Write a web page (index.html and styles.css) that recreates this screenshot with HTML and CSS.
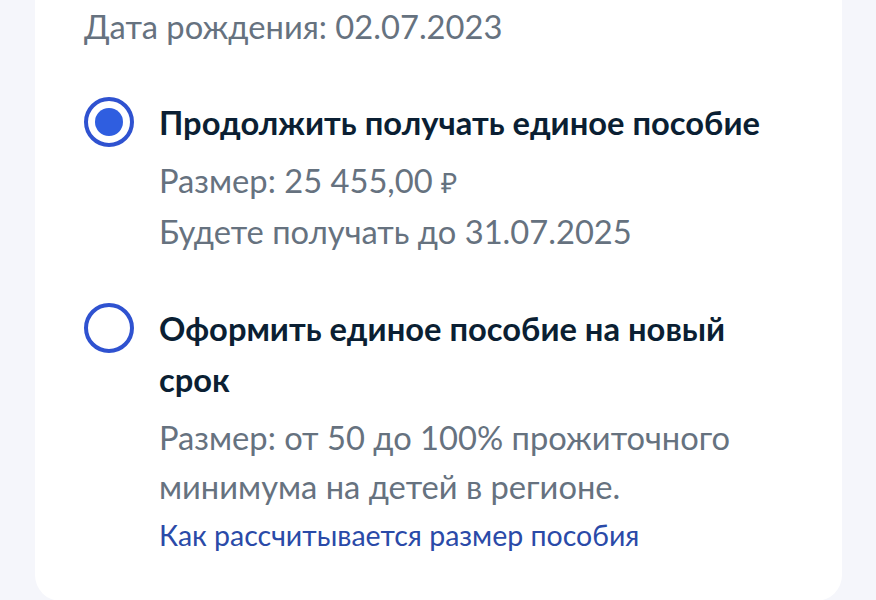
FILE: index.html
```html
<!DOCTYPE html>
<html lang="ru">
<head>
    <meta charset="UTF-8">
    <meta name="viewport" content="width=device-width, initial-scale=1.0">
    <title>Единое пособие</title>
    <link rel="stylesheet" href="styles.css">
</head>
<body>

<div class="kartochka">
    <p class="data">Дата рождения: 02.07.2023</p>

    <div class="variant">
        <span class="radio radio-vybran"></span>
        <div class="variant-tekst">
            <h3>Продолжить получать единое пособие</h3>
            <p>Размер: 25 455,00 <span class="rubl">₽</span></p>
            <p>Будете получать до 31.07.2025</p>
        </div>
    </div>

    <div class="variant">
        <span class="radio"></span>
        <div class="variant-tekst">
            <h3>Оформить единое пособие на новый срок</h3>
            <p>Размер: от 50 до 100% прожиточного минимума на детей в регионе.</p>
            <a href="#" class="ssylka">Как рассчитывается размер пособия</a>
        </div>
    </div>
</div>

</body>
</html>
```

FILE: styles.css
```css
body {
    margin: 0;
    font-family: Lato, "Open Sans", sans-serif;
    background-color: #f5f6fb;
}
.kartochka {
    width: 807px;
    margin-left: 35px;
    height: 601px;
    box-sizing: border-box;
    padding: 7px 52px 0 49px;
    background-color: white;
    border-radius: 0 0 26px 26px;
}
.data {
    margin: 0;
    font-size: 32.7px;
    line-height: 40px;
    color: #66727f;
}
.variant {
    display: flex;
    align-items: flex-start;
    gap: 25px;
    margin-top: 50px;
}
.variant + .variant {
    margin-top: 47px;
}
.radio {
    flex: none;
    width: 50px;
    height: 50px;
    box-sizing: border-box;
    border: 4px solid #2f52d0;
    border-radius: 50%;
    display: flex;
    align-items: center;
    justify-content: center;
}
.radio-vybran::after {
    content: "";
    width: 28px;
    height: 28px;
    border-radius: 50%;
    background-color: #2f5ee0;
}
.variant-tekst {
    max-width: 620px;
}
.variant-tekst h3 {
    margin: 0 0 8px;
    font-size: 32.7px;
    line-height: 51px;
    font-weight: 700;
    color: #0b1f33;
}
.variant-tekst p {
    margin: 0;
    font-size: 32.7px;
    line-height: 49px;
    color: #66727f;
}
.rubl {
    font-size: 28px;
}
.ssylka {
    display: block;
    font-size: 28.5px;
    line-height: 49px;
    color: #2a4aa8;
    text-decoration: none;
}
```
